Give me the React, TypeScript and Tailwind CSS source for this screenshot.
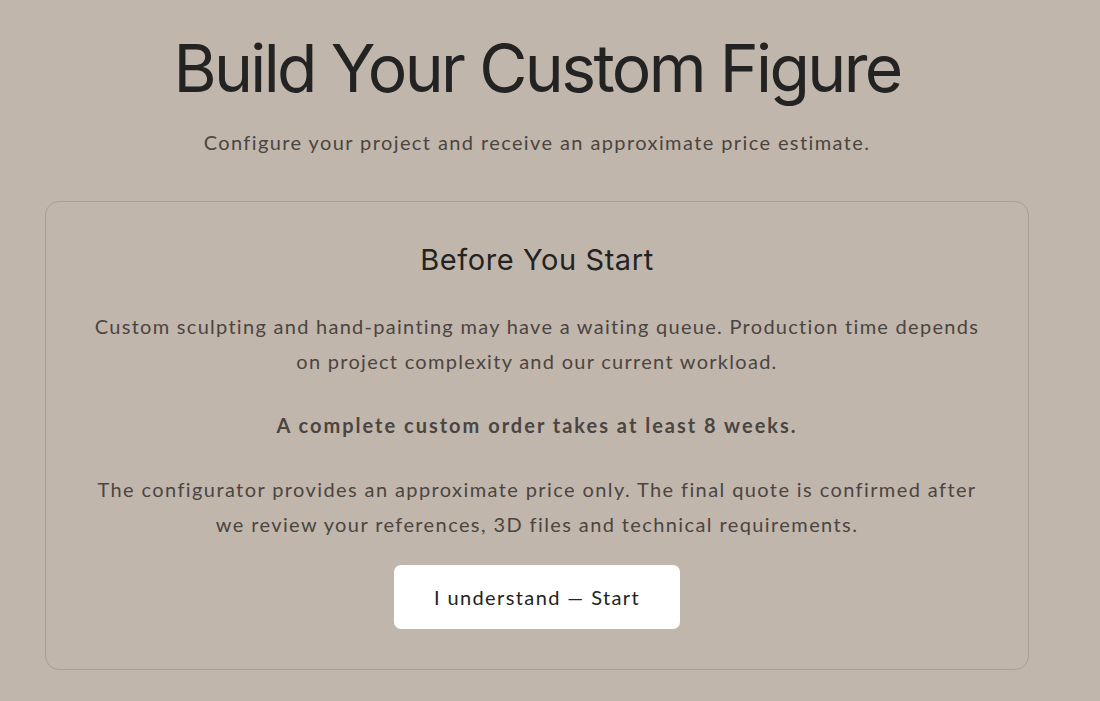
import React from "react";

const body = "font-['Lato',sans-serif]";

export default function App() {
  return (
    <div className="min-h-screen bg-[#c1b6ac] pl-[45px] pr-[71px] pt-[30px] pb-10">
      {/* Header */}
      <div className="text-center">
        <h1 className="font-['Inter',sans-serif] text-[66px] leading-[76px] font-normal tracking-[-0.04em] text-[#232323]">
          Build Your Custom Figure
        </h1>
        <p className={`${body} mt-[22px] text-[20px] leading-[28px] tracking-[0.07em] text-[#4b4541]`}>
          Configure your project and receive an approximate price estimate.
        </p>
      </div>

      {/* Notice card */}
      <div className="mt-[45px] rounded-[14px] border border-[#a99f95] px-[42px] pt-[40px] pb-[40px] text-center">
        <h2 className="font-['Inter',sans-serif] text-[29px] leading-[36px] text-[#232323] tracking-[0.02em]">
          Before You Start
        </h2>
        <p className={`${body} mt-[31px] text-[20px] leading-[35px] tracking-[0.064em] text-[#4b4541]`}>
          Custom sculpting and hand-painting may have a waiting queue. Production time depends on project complexity and our current workload.
        </p>
        <p className={`${body} mt-[29px] text-[20px] leading-[35px] font-bold tracking-[0.1em] text-[#4b4541]`}>
          A complete custom order takes at least 8 weeks.
        </p>
        <p className={`${body} mt-[29px] text-[20px] leading-[35px] tracking-[0.07em] text-[#4b4541]`}>
          The configurator provides an approximate price only. The final quote is confirmed after we review your references, 3D files and technical requirements.
        </p>
        <button className={`${body} mt-[23px] h-[64px] w-[286px] rounded-[7px] bg-white text-[20px] tracking-[0.07em] text-[#232323]`}>
          I understand — Start
        </button>
      </div>
    </div>
  );
}
